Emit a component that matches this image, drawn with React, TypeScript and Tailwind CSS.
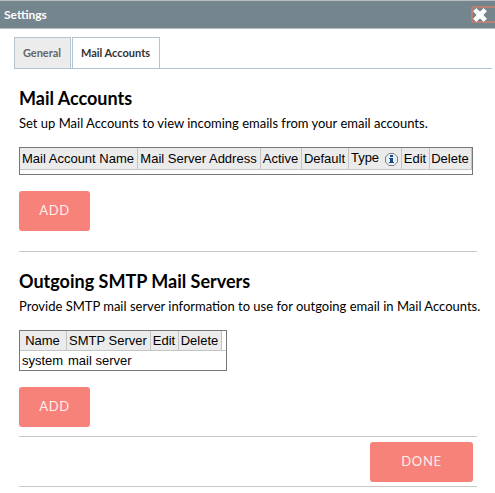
import type { ReactNode } from 'react';

function InfoIcon() {
  return (
    <svg width="13" height="13" viewBox="0 0 13 13" role="img" aria-label="Type information">
      <path d="M4 .5h5L12.500 4v5L9 12.500H4L.5 9V4z" fill="#e9eef2" stroke="#7d7d7d" />
      <path d="M5 2h3v2H5zM4 5h4v4h1v1H4V9h1V6H4z" fill="#134a86" />
    </svg>
  );
}

function CloseIcon() {
  return (
    <svg width="14" height="14" viewBox="0 0 14 14" aria-hidden="true">
      <path
        d="M3.200 0.600 7 4.200 10.800 0.600 13.400 3.200 9.800 7 13.400 10.800 10.800 13.400 7 9.800 3.200 13.400 0.600 10.800 4.200 7 0.600 3.200z"
        fill="#fff"
        stroke="#fff"
        strokeLinejoin="round"
      />
    </svg>
  );
}

function ActionButton({ children, wide = false }: { children: ReactNode; wide?: boolean }) {
  return (
    <button
      type="button"
      className={`block h-10 rounded-[3px] bg-[#f7827a] text-[13px] tracking-wider text-[#fdeeed] ${wide ? 'w-[103px]' : 'w-[71px]'}`}
    >
      {children}
    </button>
  );
}

function HeadCell({ children, width }: { children?: ReactNode; width: string }) {
  return (
    <th
      scope="col"
      className={`whitespace-nowrap border-b border-r border-[#c4c4c4] bg-[#ebebeb] p-0 pt-px pr-px text-center font-normal ${width}`}
    >
      {children}
    </th>
  );
}

function Section({ title, text, children }: { title: string; text: string; children: ReactNode }) {
  return (
    <section>
      <h2 className="text-lg leading-6 font-bold">{title}</h2>
      <p className="mt-[3px] whitespace-nowrap text-[13px] leading-5">{text}</p>
      {children}
    </section>
  );
}

const tableStyle =
  "mt-[14px] table-fixed border-separate border-spacing-0 border border-[#777] bg-white font-['Liberation_Sans',Arial,sans-serif] text-[13px] leading-4";

export default function App() {
  return (
    <div className="bg-white font-[Lato,sans-serif] text-black">
      <header className="flex h-[29px] items-center justify-between border-y border-[#b9bcbe] bg-[#74858e] pl-1">
        <h1 className="text-xs leading-4 font-bold text-white">Settings</h1>
        <button
          type="button"
          aria-label="Close"
          className="flex h-[17px] w-6 items-center rounded-l-[3px] border-2 border-r-0 border-[#b97e74]"
        >
          <CloseIcon />
        </button>
      </header>

      <div role="tablist" className="mt-2 mr-[3px] ml-[14px] flex h-8 gap-px border-b border-[#b5c4ce]">
        <button
          type="button"
          role="tab"
          aria-selected="false"
          className="w-[57px] border border-b-0 border-[#b5c4ce] bg-[#ececec] pr-px text-[11px] font-bold text-[#666]"
        >
          General
        </button>
        <button
          type="button"
          role="tab"
          aria-selected="true"
          className="w-[88px] border border-b-0 border-[#b5c4ce] bg-white pr-px text-[11px] font-bold text-[#333]"
        >
          Mail Accounts
        </button>
      </div>

      <main className="mr-[18px] ml-[19px] pt-[17px]">
        <Section title="Mail Accounts" text="Set up Mail Accounts to view incoming emails from your email accounts.">
          <table className={`w-[454px] ${tableStyle}`}>
            <thead>
              <tr className="h-[22px]">
                <HeadCell width="w-[118px]">Mail Account Name</HeadCell>
                <HeadCell width="w-[123px]">Mail Server Address</HeadCell>
                <HeadCell width="w-[41px]">Active</HeadCell>
                <HeadCell width="w-[47px]">Default</HeadCell>
                <HeadCell width="w-[53px]">
                  <span className="flex items-center justify-center gap-[6px]">
                    <span className="pb-[3px]">Type</span>
                    <InfoIcon />
                  </span>
                </HeadCell>
                <HeadCell width="w-[28px]">Edit</HeadCell>
                <HeadCell width="w-[42px]">Delete</HeadCell>
              </tr>
            </thead>
            <tbody>
              <tr>
                <td colSpan={7} className="h-1 p-0" />
              </tr>
            </tbody>
          </table>
          <div className="mt-4">
            <ActionButton>ADD</ActionButton>
          </div>
        </Section>

        <hr className="mt-5 mb-[17px] border-[#c9c9c9]" />

        <Section
          title="Outgoing SMTP Mail Servers"
          text="Provide SMTP mail server information to use for outgoing email in Mail Accounts."
        >
          <table className={`w-[208px] ${tableStyle}`}>
            <thead>
              <tr className="h-5">
                <HeadCell width="w-[47px]">Name</HeadCell>
                <HeadCell width="w-[84px]">SMTP Server</HeadCell>
                <HeadCell width="w-[28px]">Edit</HeadCell>
                <HeadCell width="w-[43px]">Delete</HeadCell>
                <td className="w-[4px] border-b border-[#c4c4c4] p-0" />
              </tr>
            </thead>
            <tbody>
              <tr>
                <td className="h-[19px] whitespace-nowrap py-0 pr-0 pl-[2px]">system</td>
                <td colSpan={4} className="h-[19px] p-0 pl-px">
                  mail server
                </td>
              </tr>
            </tbody>
          </table>
          <div className="mt-4">
            <ActionButton>ADD</ActionButton>
          </div>
        </Section>

        <footer className="mt-[9px] flex justify-end border-y border-[#c9c9c9] pt-[5px] pr-1 pb-1">
          <ActionButton wide>DONE</ActionButton>
        </footer>
      </main>
    </div>
  );
}
